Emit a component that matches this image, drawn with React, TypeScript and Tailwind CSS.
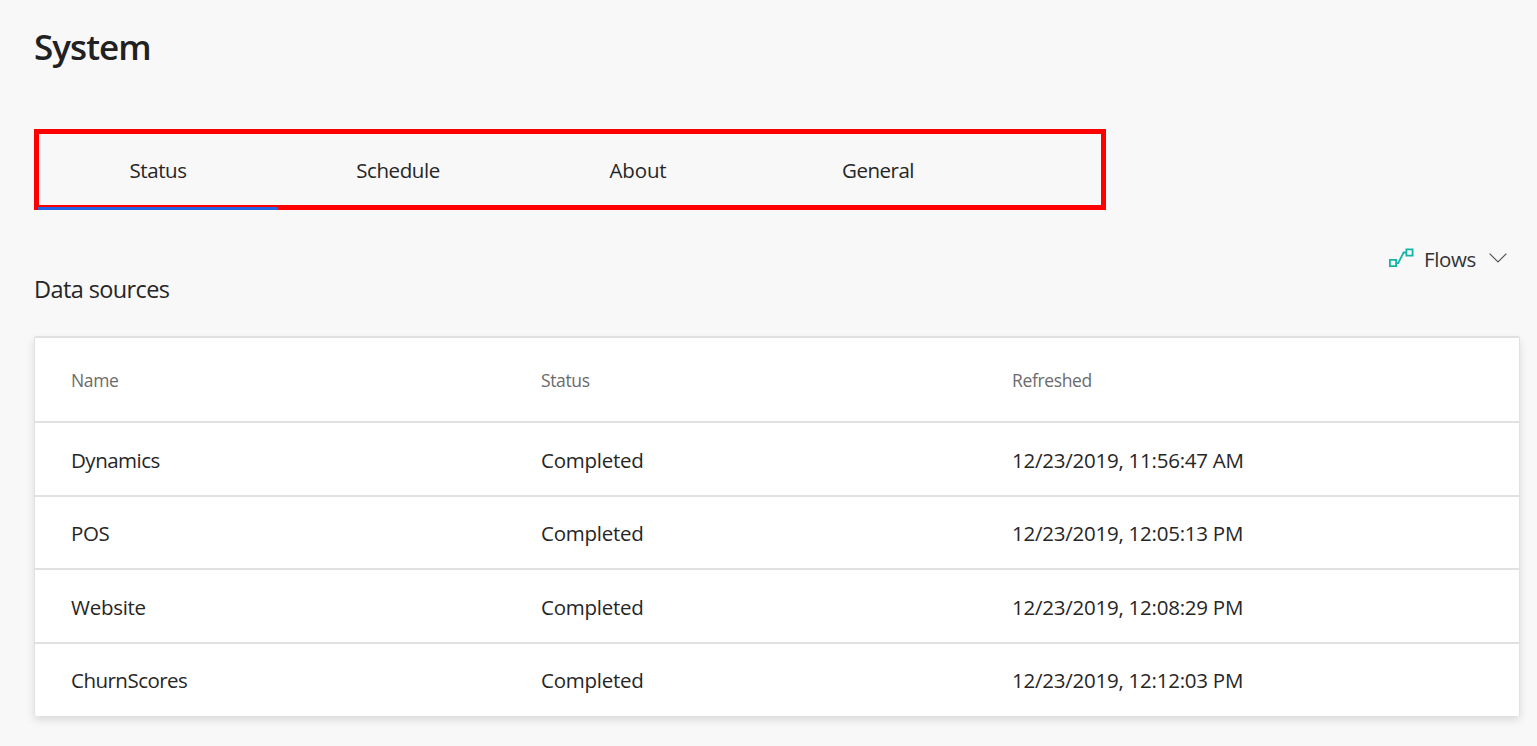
const tabs = [
  { label: "Status", tracking: "tracking-[-0.4px]" },
  { label: "Schedule", tracking: "tracking-[-0.4px]" },
  { label: "About", tracking: "tracking-[-0.15px]" },
  { label: "General", tracking: "tracking-[-0.5px]" },
];

const rows = [
  { name: "Dynamics", refreshed: "12/23/2019, 11:56:47 AM", height: "h-[74px] pt-[2px]", tracking: "tracking-[-0.5px]" },
  { name: "POS", refreshed: "12/23/2019, 12:05:13 PM", height: "h-[73px] pt-px", tracking: "tracking-[-0.4px]" },
  { name: "Website", refreshed: "12/23/2019, 12:08:29 PM", height: "h-[74px] pt-[2px]", tracking: "tracking-[-0.28px]" },
  { name: "ChurnScores", refreshed: "12/23/2019, 12:12:03 PM", height: "h-[74px] pt-px", tracking: "tracking-[-0.52px]" },
];

function FlowIcon() {
  return (
    <svg width="26" height="20" viewBox="0 0 26 20" fill="none" stroke="#12b5a5" strokeWidth="1.8">
      <path d="M1.9 11.9h6.2v6.2H1.9zM18.4 1.4h6.2v6.2h-6.2zM8.2 15.2h2L15.6 4.5h2.8" />
    </svg>
  );
}

export default function App() {
  return (
    <main className="flex h-[746px] w-[1537px] flex-col overflow-hidden bg-[#f8f8f8] pl-[34px] font-['Open_Sans','Noto_Sans',sans-serif] text-[20.5px] text-[#262626]">
      <h1 className="mt-[22px] h-[50px] text-[35px] leading-[50px] font-semibold tracking-[-0.95px] text-[#212121]">System</h1>

      <nav className="relative mt-[57px] flex h-[81px] w-[1072px] shrink-0 border-[5px] border-[#ff0000]">
        <div className="-ml-px flex">
          {tabs.map((tab) => (
            <button key={tab.label} className={`h-[73px] w-[240px] ${tab.tracking}`}>
              {tab.label}
            </button>
          ))}
        </div>
        <span className="absolute -bottom-[5px] -left-px h-[3px] w-[240px] bg-[#2266e3]" />
      </nav>

      <div className="flex h-[126px] shrink-0 justify-between">
        <h2 className="mt-[63px] h-8 text-[23.5px] leading-8 tracking-[-0.6px]">Data sources</h2>
        <button className="mt-[32px] mr-[30px] flex h-8 items-center text-[#333333]">
          <FlowIcon />
          <span className="ml-[10px] w-[53px] pt-px text-left leading-8 tracking-[-0.35px] whitespace-nowrap">Flows</span>
          <svg className="ml-[12px]" width="18" height="10" viewBox="0 0 18 10" fill="none" stroke="#555" strokeWidth="1.2">
            <path d="M.6.6 9 9 17.4.6" />
          </svg>
        </button>
      </div>

      <section className="w-[1486px] shrink-0 rounded-[2px] border-x border-t-2 border-[#e1e1e1] bg-white shadow-[0_4px_8px_rgba(0,0,0,0.12)]">
        <div className="grid h-[83px] grid-cols-[470px_471px_1fr] items-center pt-[2px] pl-[36px] text-[17.5px] tracking-[-0.36px] text-[#6b6b6b]">
          <span>Name</span>
          <span>Status</span>
          <span>Refreshed</span>
        </div>
        {rows.map((row) => (
          <div
            key={row.name}
            className={`grid grid-cols-[470px_471px_1fr] items-center border-t-2 border-[#e1e1e1] pl-[36px] ${row.height}`}
          >
            <span className={row.tracking}>{row.name}</span>
            <span className="tracking-[-0.25px]">Completed</span>
            <span className="tracking-[-0.24px]">{row.refreshed}</span>
          </div>
        ))}
      </section>
    </main>
  );
}
